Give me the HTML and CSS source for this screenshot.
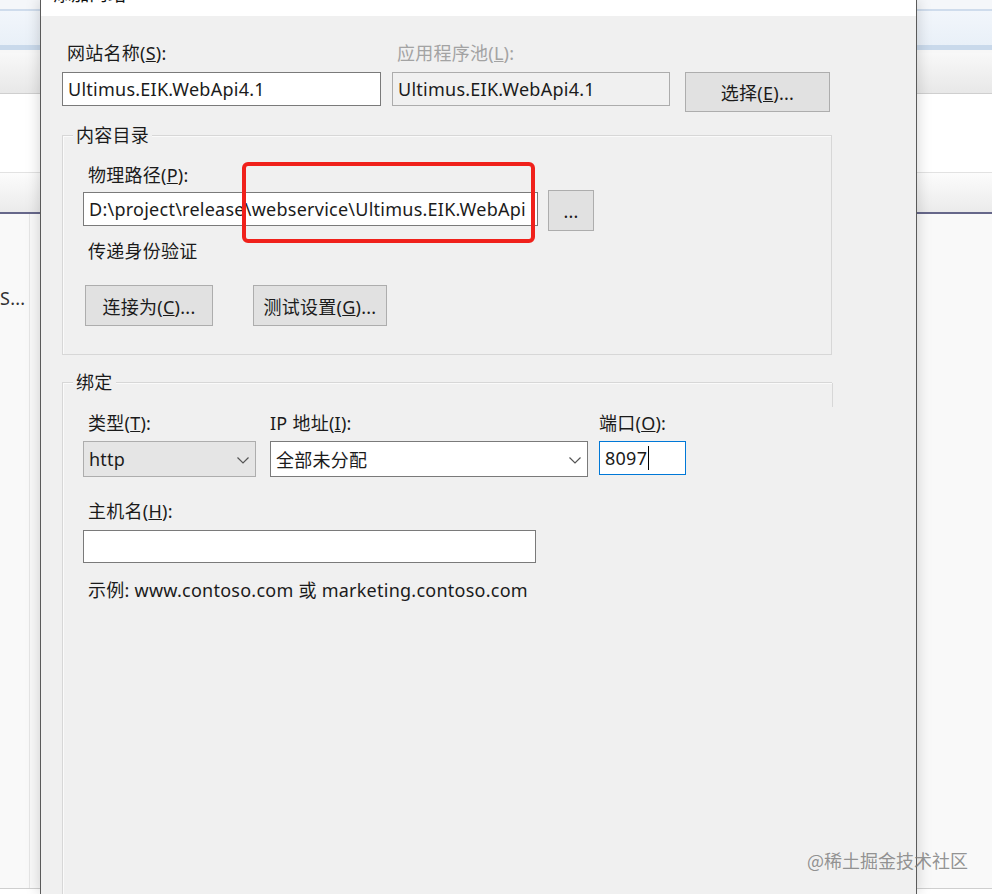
FILE: index.html
```html
<!DOCTYPE html>
<html lang="zh-CN">
<head>
  <meta charset="UTF-8">
  <meta name="viewport" content="width=device-width, initial-scale=1.0">
  <title>添加网站</title>
  <link rel="stylesheet" href="styles.css">
</head>
<body>
  <div class="screen">
    <!-- IIS manager window behind the dialog -->
    <div class="backdrop backdrop-left">
      <div class="band band-gap"></div>
      <div class="band band-line-blue"></div>
      <div class="band band-ribbon"></div>
      <div class="band band-line-blue-thick"></div>
      <div class="band band-gap-small"></div>
      <div class="band band-toolbar"></div>
      <div class="band band-line"></div>
      <div class="band band-white"></div>
      <div class="band band-line-light"></div>
      <div class="band band-header"></div>
      <div class="band band-line-dark"></div>
      <div class="list-area">
        <div class="list-col">S...</div>
      </div>
      <div class="band band-line"></div>
      <div class="band band-foot"></div>
    </div>

    <div class="dialog">
      <div class="titlebar"><span class="title">添加网站</span></div>
      <div class="dialog-body">
        <div class="site-row">
          <div class="field field-name">
            <label class="label">网站名称(<u>S</u>):</label>
            <div class="textbox">Ultimus.EIK.WebApi4.1</div>
          </div>
          <div class="field field-pool">
            <label class="label disabled">应用程序池(<u>L</u>):</label>
            <div class="textbox readonly">Ultimus.EIK.WebApi4.1</div>
          </div>
          <button class="btn btn-select">选择(<u>E</u>)...</button>
        </div>

        <div class="group group-content">
          <span class="legend">内容目录</span>
          <label class="label">物理路径(<u>P</u>):</label>
          <div class="path-row">
            <div class="textbox path-box">D:\project\release\webservice\Ultimus.EIK.WebApi</div>
            <button class="btn btn-browse">...</button>
          </div>
          <div class="label auth-label">传递身份验证</div>
          <div class="auth-row">
            <button class="btn btn-connect">连接为(<u>C</u>)...</button>
            <button class="btn btn-test">测试设置(<u>G</u>)...</button>
          </div>
        </div>

        <div class="group group-binding">
          <span class="legend">绑定</span>
          <div class="binding-row">
            <div class="field col-type">
              <label class="label">类型(<u>T</u>):</label>
              <div class="combo combo-type">
                <span>http</span>
                <svg class="chevron" width="12" height="7" viewBox="0 0 12 7"><path d="M0.5 0.5 L6 6 L11.5 0.5" fill="none" stroke="#555" stroke-width="1.2"/></svg>
              </div>
            </div>
            <div class="field col-ip">
              <label class="label flush">IP 地址(<u>I</u>):</label>
              <div class="combo combo-ip">
                <span>全部未分配</span>
                <svg class="chevron" width="12" height="7" viewBox="0 0 12 7"><path d="M0.5 0.5 L6 6 L11.5 0.5" fill="none" stroke="#555" stroke-width="1.2"/></svg>
              </div>
            </div>
            <div class="field col-port">
              <label class="label flush">端口(<u>O</u>):</label>
              <div class="textbox port-box">8097<span class="caret"></span></div>
            </div>
          </div>
          <label class="label host-label">主机名(<u>H</u>):</label>
          <div class="textbox host-box"></div>
          <div class="label example">示例: www.contoso.com 或 marketing.contoso.com</div>
        </div>
      </div>
    </div>

    <div class="backdrop backdrop-right">
      <div class="band band-gap"></div>
      <div class="band band-line-blue"></div>
      <div class="band band-ribbon"></div>
      <div class="band band-line-blue-thick"></div>
      <div class="band band-gap-small"></div>
      <div class="band band-toolbar"></div>
      <div class="band band-line"></div>
      <div class="band band-white"></div>
      <div class="band band-line-light"></div>
      <div class="band band-header"></div>
      <div class="band band-line-dark"></div>
      <div class="list-area"></div>
      <div class="band band-line"></div>
      <div class="band band-foot"></div>
    </div>

    <!-- annotation drawn on top of the screenshot -->
    <div class="highlight"></div>
    <div class="watermark">@稀土掘金技术社区</div>
  </div>
</body>
</html>
```

FILE: styles.css
```css
/* General Reset */
* {
  margin: 0;
  padding: 0;
  box-sizing: border-box;
}

body {
  font-family: "Noto Sans", "Noto Sans CJK SC", sans-serif;
  font-size: 18px;
  letter-spacing: 0.25px;
  color: #1b1b1b;
  background: #fff;
  overflow: hidden;
}

.screen {
  position: relative;
  display: flex;
  width: 992px;
  height: 894px;
  overflow: hidden;
}

/* Background window */
.backdrop {
  display: flex;
  flex-direction: column;
  background: #fafafa;
}

.backdrop-left {
  width: 40px;
}

.backdrop-right {
  flex: 1;
}

.band-gap { height: 9px; background: #f5f7fa; }
.band-line-blue { height: 2px; background: #cfdcec; }
.band-ribbon { height: 34px; background: linear-gradient(#f2f6fb, #e9f0f8); }
.band-line-blue-thick { height: 5px; background: #c9d9eb; }
.band-gap-small { height: 3px; background: #f7f7f7; }
.band-toolbar { height: 40px; background: linear-gradient(#f8f8f8, #e8e8e8); }
.band-line { height: 1px; background: #cfcfcf; }
.band-white { height: 78px; background: #fff; }
.band-line-light { height: 1px; background: #e2e2e2; }
.band-header { height: 39px; background: linear-gradient(#fcfcfc, #ebebeb); }
.band-line-dark { height: 2px; background: #66678a; }
.band-foot { height: 5px; background: #fff; }

.list-area {
  flex: 1;
  display: flex;
  background: #f9f9f9;
}

.list-col {
  width: 30px;
  border-right: 1px solid #e6e6e6;
  padding-top: 72px;
  line-height: 24px;
  color: #333;
  white-space: nowrap;
  overflow: hidden;
}

/* Dialog */
.dialog {
  width: 877px;
  display: flex;
  flex-direction: column;
  background: #f0f0f0;
  border-left: 1px solid #5a5a5a;
  border-right: 1px solid #5a5a5a;
  box-shadow: 0 0 14px rgba(0, 0, 0, 0.18);
  z-index: 1;
}

.titlebar {
  height: 16px;
  background: #fff;
  overflow: hidden;
  padding-left: 12px;
}

.title {
  display: block;
  margin-top: -18px;
  line-height: 24px;
  color: #111;
}

.dialog-body {
  flex: 1;
  display: flex;
  flex-direction: column;
  padding: 25px 0 0 21px;
}

.label {
  display: block;
  line-height: 24px;
  padding-left: 5px;
  white-space: nowrap;
}

.label.flush {
  padding-left: 0;
}

.label.disabled {
  color: #a3a3a3;
}

.textbox {
  height: 34px;
  line-height: 32px;
  padding: 0 5px;
  background: #fff;
  border: 1px solid #7a7a7a;
  white-space: nowrap;
  overflow: hidden;
}

.textbox.readonly {
  background: #f0f0f0;
  border-color: #acacac;
}

.btn {
  font-family: inherit;
  font-size: 18px;
  letter-spacing: inherit;
  color: #1b1b1b;
  background: #e1e1e1;
  border: 1px solid #adadad;
  height: 41px;
}

/* Site name row */
.site-row {
  display: flex;
  align-items: flex-start;
}

.site-row .textbox {
  margin-top: 7px;
}

.field-name {
  width: 319px;
}

.field-pool {
  width: 278px;
  margin-left: 11px;
}

.btn-select {
  width: 145px;
  height: 40px;
  margin: 31px 0 0 15px;
}

/* Group boxes */
.group {
  position: relative;
  width: 770px;
  border: 1px solid #d7d7d7;
  box-shadow: inset 1px 1px 0 #fafafa;
}

.legend {
  position: absolute;
  top: -13px;
  left: 10px;
  padding: 0 3px;
  line-height: 24px;
  background: #f0f0f0;
}

.group-content {
  margin-top: 23px;
  padding: 27px 0 28px 20px;
}

.path-row {
  display: flex;
  align-items: flex-start;
  margin-top: 3px;
}

.path-box {
  width: 455px;
  margin-top: 2px;
  text-overflow: clip;
}

.btn-browse {
  width: 46px;
  margin-left: 10px;
  line-height: 1;
}

.auth-label {
  margin-top: 8px;
}

.auth-row {
  display: flex;
  margin-top: 22px;
  padding-left: 2px;
}

.btn-connect {
  width: 128px;
}

.btn-test {
  width: 134px;
  margin-left: 40px;
}

.group-binding {
  flex: 1;
  margin-top: 27px;
  padding: 28px 0 0 20px;
  border-right: 0;
  border-bottom: 0;
}

.group-binding::after {
  content: '';
  position: absolute;
  top: 0;
  right: -1px;
  height: 24px;
  border-right: 1px solid #d7d7d7;
}

.binding-row {
  display: flex;
  align-items: flex-start;
}

.combo {
  display: flex;
  align-items: center;
  justify-content: space-between;
  height: 36px;
  margin-top: 6px;
  padding: 0 6px 0 5px;
  border: 1px solid #7a7a7a;
  background: #fff;
}

.combo-type {
  background: #e5e5e5;
  border-color: #adadad;
}

.chevron {
  flex-shrink: 0;
  margin-top: 2px;
}

.col-type {
  width: 173px;
}

.col-ip {
  width: 318px;
  margin-left: 14px;
}

.col-port {
  width: 87px;
  margin-left: 11px;
}

.port-box {
  margin-top: 6px;
  border-color: #0078d7;
  display: flex;
  align-items: center;
}

.caret {
  display: inline-block;
  width: 1px;
  height: 24px;
  margin-left: 1px;
  background: #000;
}

.host-label {
  margin-top: 22px;
}

.host-box {
  width: 453px;
  height: 33px;
  margin-top: 7px;
}

.example {
  margin-top: 15px;
}

/* Annotation overlays */
.highlight {
  position: absolute;
  left: 242px;
  top: 162px;
  width: 293px;
  height: 81px;
  border: 4px solid #f0211b;
  border-radius: 6px;
  z-index: 2;
}

.watermark {
  position: absolute;
  right: 24px;
  top: 848px;
  font-family: "Noto Sans CJK SC", sans-serif;
  font-size: 18px;
  line-height: 24px;
  letter-spacing: 0;
  color: rgba(120, 120, 120, 0.8);
  z-index: 2;
}
```
